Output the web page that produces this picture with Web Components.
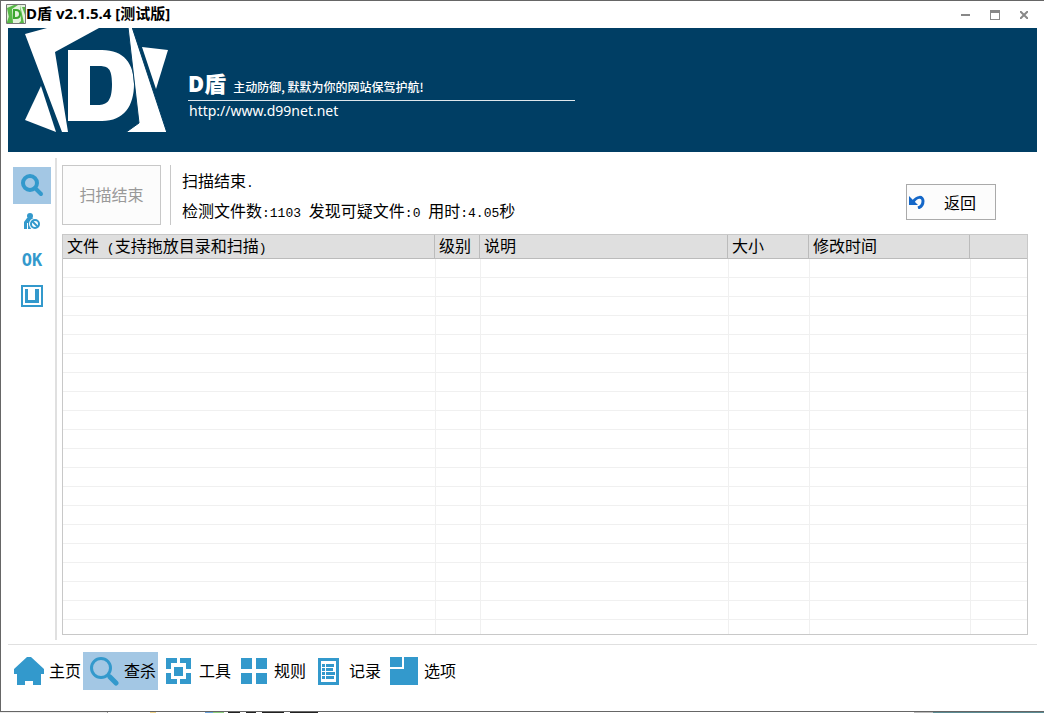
<!DOCTYPE html>
<html lang="zh-CN">
<head>
<meta charset="utf-8">
<title>D盾 v2.1.5.4 [测试版]</title>
<style>
  :root{
    --blue:#3399cc;
    --select:#a3c7e4;
    --navy:#003e64;
    --line:#c8c8c8;
    --soft:#e0e0e0;
    --frame:#666;
    --mono:"Liberation Mono","Noto Sans CJK SC",monospace;
  }
  html,body{height:100%}
  body{margin:0;background:#fff;color:#000;font:16px/20px "Noto Sans CJK SC",sans-serif}
</style>
</head>
<body>
<shield-window>
  <title-bar slot="title">D盾 v2.1.5.4 [测试版]</title-bar>
  <app-banner slot="banner"></app-banner>
  <side-rail slot="rail"></side-rail>
  <scan-status slot="main"></scan-status>
  <result-grid slot="main"></result-grid>
  <bottom-nav slot="nav">
    <nav-item icon="home">主页</nav-item>
    <nav-item icon="search" active>查杀</nav-item>
    <nav-item icon="tools">工具</nav-item>
    <nav-item icon="rules">规则</nav-item>
    <nav-item icon="log">记录</nav-item>
    <nav-item icon="options">选项</nav-item>
  </bottom-nav>
</shield-window>

<script>
(function () {
  const reset = `
  :host,*{box-sizing:border-box}
  svg{display:block;flex:none}
  button{margin:0;padding:0;border:0;background:none;font:inherit;color:inherit;cursor:pointer}`;

  // registers an element whose shadow root is built once from css + html
  function define(name, css, html) {
    customElements.define(name, class extends HTMLElement {
      connectedCallback() {
        if (this.shadowRoot) return;
        const root = this.attachShadow({ mode: 'open' });
        root.innerHTML = '<style>' + reset + css + '</style>' +
          (typeof html === 'function' ? html(this) : html);
      }
    });
  }

  // half-width characters use the mono face, one step smaller
  const half = (text) => text.replace(/[\x20-\x7e]+/g, (s) => '<span class="half">' + s + '</span>');
  const halfCss = '.half{font:13px/1 var(--mono);white-space:pre}';

  const icons = {
    home: '<svg width="30" height="28" fill="currentColor"><path d="M13 0h4l13 12v5h-3v11h-8v-4h-8v4H3V17H0v-5z"/></svg>',
    search: '<svg width="30" height="30" fill="none" stroke="currentColor"><circle cx="12" cy="12" r="9.5" stroke-width="3"/><path d="M19 19l2 2" stroke-width="3"/><path d="M21 21l6 6" stroke-width="5" stroke-linecap="round"/></svg>',
    tools: '<svg width="25" height="26" fill="currentColor"><path d="M0 0h11v5H5v6H0zM14 0h11v11h-5V5h-6zM0 15h5v6h6v5H0zM20 15h5v11H14v-5h6zM8 9h9v9H8z"/></svg>',
    rules: '<svg width="26" height="26" fill="currentColor"><path d="M0 0h11v11H0zM15 0h11v11H15zM0 15h11v11H0zM15 15h11v11H15z"/></svg>',
    log: '<svg width="21" height="27"><path fill="currentColor" d="M0 0h21v27H0z"/><path fill="#fff" d="M3 3h15v21H3z"/><path fill="currentColor" d="M4 6h3v3H4zM8 6h8v3H8zM4 10h3v3H4zM8 10h7v3H8zM4 14h3v3H4zM8 14h9v3H8zM4 18h3v3H4zM8 18h8v3H8z"/></svg>',
    options: '<svg width="28" height="28" fill="currentColor"><path d="M0 0h12v10H0zM14 0h14v28H0V12h14z"/></svg>'
  };

  define('shield-window', `
  :host{display:flex;flex-direction:column;min-height:100vh}
  .window{flex:1;display:flex;flex-direction:column;border:1px solid var(--frame);border-right:0;padding:0 7px}
  .body{flex:1;display:flex;padding:6px 0 4px}
  main{flex:1;min-width:0;display:flex;flex-direction:column;gap:9px;padding:7px 9px 5px 5px}
  /* sliver of the desktop under the window */
  .desk{height:1px;background:linear-gradient(90deg,#eee 107px,#999 107px 108px,#fff 108px 150px,#f3d58b 150px 156px,#fff 156px 205px,#6ba3dd 205px 213px,#8ccf7d 213px 224px,#fff 224px 228px,#222 228px 240px,#fff 240px 246px,#222 246px 256px,#fff 256px 262px,#222 262px 284px,#fff 284px 290px,#222 290px 318px,#fff 318px calc(100% - 130px),#bbb calc(100% - 130px) calc(100% - 111px),#5b8c94 calc(100% - 111px))}`, `
  <div class="window">
    <slot name="title"></slot>
    <slot name="banner"></slot>
    <div class="body"><slot name="rail"></slot><main><slot name="main"></slot></main></div>
    <slot name="nav"></slot>
  </div>
  <div class="desk"></div>`);

  define('title-bar', `
  :host{display:flex;align-items:center;height:27px;margin-left:-2px;color:#000}
  h1{flex:1;margin:0;padding-bottom:3px;font:bold 15px/20px "Noto Sans","Noto Sans CJK SC",sans-serif}
  .controls{display:flex;gap:4px;padding-right:1px}
  .controls button{width:25px;height:20px;display:flex;align-items:center;justify-content:center;color:#888}
  .mark{margin-bottom:1px}`, `
  <svg class="mark" width="20" height="20"><path fill="#e4f3dd" stroke="#777" d="M.5.5h19v19H.5z"/><path fill="#57b847" d="M1 4l7-3h4L6 5l1 14H4zM1 18l2-6 2 7H1zM14 1l4 18h-5l2-2zM16 3h3v8z"/><path fill="none" stroke="#3ca62e" stroke-width="2" d="M8 6h2q4 0 4 4t-4 4H8z"/></svg>
  <h1><slot></slot></h1>
  <div class="controls">
    <button aria-label="最小化"><svg width="9" height="2"><path fill="currentColor" d="M0 0h9v2H0z"/></svg></button>
    <button aria-label="最大化"><svg width="10" height="10"><path fill="currentColor" fill-rule="evenodd" d="M0 0h10v10H0zM1 3v6h8V3z"/></svg></button>
    <button aria-label="关闭"><svg width="8" height="8"><path stroke="currentColor" stroke-width="2" d="M0 0l8 8M8 0L0 8"/></svg></button>
  </div>`);

  define('app-banner', `
  :host{display:flex;gap:20px;height:124px;padding-left:16px;background:var(--navy);color:#fff}
  .copy{width:387px;padding-top:43px}
  .head{display:flex;align-items:baseline;gap:7px;height:30px;border-bottom:1px solid #dfe7ec}
  strong{font:900 22px/24px "Noto Sans","Noto Sans CJK SC",sans-serif}
  .slogan{font:500 12px/20px "Noto Sans CJK SC",sans-serif}
  a{display:block;padding:0 1px;font:14px/20px "Noto Sans","Noto Sans CJK SC",sans-serif;color:inherit;text-decoration:none}`, `
  <svg width="144" height="104" fill="#fff" aria-hidden="true">
    <path d="M1 6L23 0h52L31 24l13 80h-6z"/>
    <path d="M17 58l15 46L1 92z"/>
    <path fill-rule="evenodd" d="M44 22h34c22 0 32 14 32 34 0 22-10 37-32 37H44zM66 38v39h8c9 0 14-4 14-21s-5-18-14-18z"/>
    <path stroke="#003e64" d="M104 -1h4l35 106h-42l14-10z"/>
    <path d="M118 19l26 3-12 39z"/>
  </svg>
  <div class="copy">
    <div class="head"><strong>D盾</strong><span class="slogan">主动防御, 默默为你的网站保驾护航!</span></div>
    <a href="http://www.d99net.net">http://www.d99net.net</a>
  </div>`);

  define('side-rail', `
  :host{display:block;flex:none;border-right:2px solid var(--soft);padding:9px 4px 0 5px}
  nav{display:flex;flex-direction:column}
  button{width:38px;height:37px;display:flex;align-items:center;justify-content:center;color:var(--blue)}
  .on{background:var(--select)}
  .ok{font:bold 17px/20px "DejaVu Sans Mono",monospace}`, `
  <nav>
    <button class="on" aria-label="扫描"><svg width="23" height="23" fill="none" stroke="currentColor"><circle cx="9" cy="9" r="7" stroke-width="4"/><path d="M14 14l6 6" stroke-width="4" stroke-linecap="round"/></svg></button>
    <button aria-label="隔离"><svg width="16" height="19" fill="currentColor"><circle cx="6" cy="3" r="3"/><path d="M3 5h6l1 2 2 2-4 2v5H4v-6H3v6H0V9z"/><circle cx="11" cy="11" r="6" fill="#fff"/><circle cx="11" cy="11" r="4" fill="none" stroke="currentColor" stroke-width="2"/><path stroke="currentColor" stroke-width="2" d="M8 8l6 6"/></svg></button>
    <button class="ok">OK</button>
    <button aria-label="窗口"><svg width="22" height="23"><path fill="none" stroke="currentColor" stroke-width="2" d="M1 1h20v20H1z"/><path fill="currentColor" d="M4 4h3v11h7V4h4v14H4z"/></svg></button>
  </nav>`);

  define('scan-status', `
  :host{display:flex;align-items:center;gap:9px;height:60px}
  button{border:1px solid var(--line);background:#fcfcfc}
  .scan{width:99px;height:60px;padding-bottom:3px;color:#999}
  .info{flex:1;height:60px;border-left:1px solid var(--line);padding-left:11px}
  p{margin:0;line-height:30px}
  .back{align-self:flex-end;width:90px;height:36px;margin:0 32px 5px 0;border-color:#aaa;display:flex;align-items:center;gap:19px;padding-left:2px}
  ${halfCss}`, `
  <button class="scan" disabled>扫描结束</button>
  <div class="info"><p>${half('扫描结束.')}</p><p>${half('检测文件数:1103 发现可疑文件:0 用时:4.05秒')}</p></div>
  <button class="back"><svg width="16" height="14"><path fill="none" stroke="#1467c8" stroke-width="3" d="M4 7C8 1 14 1 14 6c0 4-2 6-5 7"/><path fill="#1467c8" d="M0 1v9h9z"/></svg>返回</button>`);

  define('result-grid', `
  :host{display:block;flex:1 0 401px;height:401px;overflow:hidden;border:1px solid var(--line)}
  table{width:100%;table-layout:fixed;border-collapse:separate;border-spacing:0}
  th{height:24px;padding:0 0 3px 4px;border-right:1px solid #bbb;border-bottom:1px solid #bbb;background:#dfdfdf;font-weight:400;line-height:20px;text-align:left;white-space:nowrap}
  th:last-child{border-right:0}
  td{height:19px;padding:0;border-left:1px solid #f0f0f0;border-bottom:1px solid #f0f0f0}
  td:first-child{border-left:0}
  ${halfCss}`, () => {
    const cols = [['文件 (支持拖放目录和扫描)', 372], ['级别', 45], ['说明', 248], ['大小', 81], ['修改时间', 161], ['', 0]];
    return '<table><thead><tr>' +
      cols.map(([t, w]) => '<th scope="col"' + (w ? ' style="width:' + w + 'px"' : '') + '>' + half(t) + '</th>').join('') +
      '</tr></thead><tbody>' +
      ('<tr>' + '<td></td>'.repeat(cols.length) + '</tr>').repeat(20) +
      '</tbody></table>';
  });

  define('bottom-nav', `
  :host{display:block;border-top:1px solid var(--soft);padding:7px 0 21px}
  nav{display:flex}`, '<nav><slot></slot></nav>');

  define('nav-item', `
  :host{display:block}
  :host([active]){background:var(--select)}
  button{display:flex;align-items:center;width:75px;height:38px;white-space:nowrap}
  .icon{width:41px;flex:none;display:flex;justify-content:center;color:var(--blue)}
  .label{padding-bottom:3px}`,
  (el) => '<button><span class="icon">' + icons[el.getAttribute('icon')] + '</span><span class="label"><slot></slot></span></button>');
})();
</script>
</body>
</html>
